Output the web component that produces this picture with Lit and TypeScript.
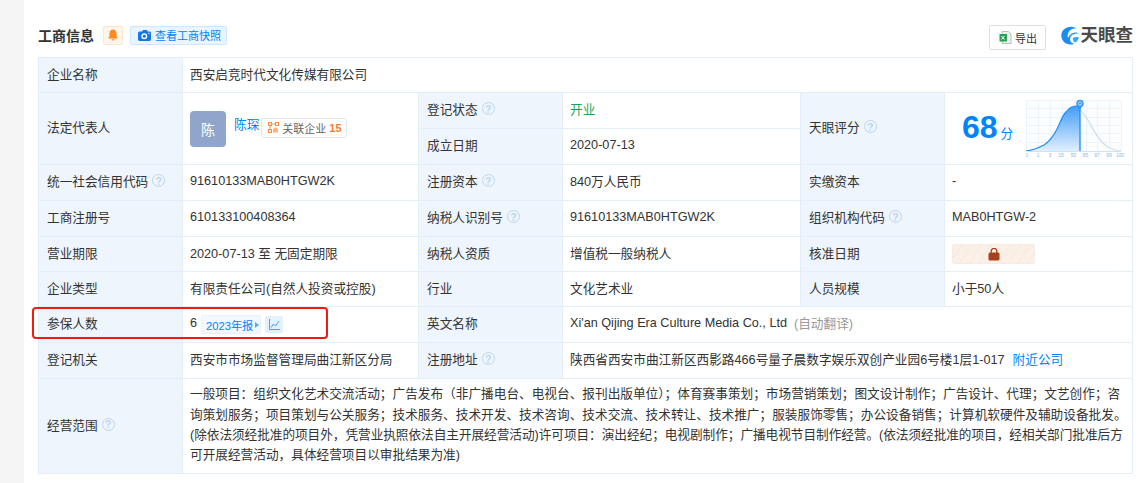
import { LitElement, html, css, svg } from "lit";
import { customElement } from "lit/decorators.js";

const area =
  "M0 52 C6 51.500 12 49 18 46 C24 42 28 36 31 30 C34 24 36 17 40 13 C43 9 46 7 50 7 C52 7 53 8 54 10";
const rest = "M54 10 C57 13 59 17 62 21 C65 26 68 33 72 38 C75 42 78 46 82 48 C86 50 90 52 95 52";

const chart = () => {
  const xs = [0.5, 12, 24, 35, 47.5, 59.5, 71, 83, 94];
  const labels = ["0", "1", "3", "15", "50", "85", "97", "99", "100"];
  return html`<svg class="chart" width="100" height="60" viewBox="0 0 100 60" aria-hidden="true">
    <defs>
      <linearGradient id="fill" x1="0" y1="0" x2="0" y2="1">
        <stop offset="0" stop-color="#3f9dfb"></stop>
        <stop offset="1" stop-color="#e3f0fe"></stop>
      </linearGradient>
    </defs>
    <rect x="0.5" y="1.500" width="95" height="51" fill="#fbfdff"></rect>
    ${[0, 12, 24, 36, 48, 60, 71, 83, 95].map(
      (x) => svg`<line x1=${x + 0.5} x2=${x + 0.5} y1="1" y2="52" stroke="#edf3fa"></line>`
    )}
    ${[1, 9, 18, 26, 34, 43].map(
      (y) => svg`<line x1="0" x2="95" y1=${y + 0.5} y2=${y + 0.5} stroke="#edf3fa"></line>`
    )}
    <path d=${rest} fill="none" stroke="#d5e0ea" stroke-width="1.300"></path>
    <path d=${area + " L54 52.500 L0 52.500 Z"} fill="url(#fill)"></path>
    <path d=${area} fill="none" stroke="#1f8bf5" stroke-width="1.200"></path>
    <line x1="54" x2="54" y1="8" y2="53" stroke="#2b90f5" stroke-width="1.400"></line>
    <line x1="0" x2="95" y1="52.500" y2="52.500" stroke="#cfe3f8"></line>
    <circle cx="54" cy="4.500" r="3.800" fill="#3c97f3"></circle>
    <path d="M51.800 7.500 L54 10.500 L56.200 7.500 Z" fill="#3c97f3"></path>
    <circle cx="54" cy="4.500" r="1.700" fill="none" stroke="#d8ebfe" stroke-width=".8"></circle>
    ${labels.map(
      (l, i) =>
        svg`<text x=${xs[i]} y="58" text-anchor="middle" font-size="4.800" fill="#86b4e6" font-family="Liberation Sans, sans-serif">${l}</text>`
    )}
  </svg>`;
};

@customElement("app-root")
export class AppRoot extends LitElement {
  static styles = css`
    :host {
      display: block;
      width: 1142px;
      height: 483px;
      overflow: hidden;
      background: #f5f5f5;
      font-family: "Liberation Sans", "Noto Sans CJK SC", sans-serif;
      font-size: 12.67px;
      color: #333;
    }
    .panel {
      position: relative;
      margin-left: 24px;
      height: 483px;
      box-sizing: border-box;
      background: #fff;
      padding: 25px 9px 0 14px;
    }
    .head {
      display: flex;
      justify-content: space-between;
      height: 32px;
    }
    .head-left {
      display: flex;
      align-items: center;
      height: 20px;
    }
    .title {
      font-size: 14px;
      font-weight: 700;
      color: #333;
      margin-right: 9px;
    }
    .bell {
      display: flex;
      align-items: center;
      justify-content: center;
      box-sizing: border-box;
      width: 20px;
      height: 19px;
      border: 1px solid #fde7d0;
      background: #fff5ea;
      border-radius: 2px;
      margin-right: 7px;
    }
    .snap {
      display: flex;
      align-items: center;
      gap: 4px;
      box-sizing: border-box;
      width: 97px;
      height: 19px;
      padding-left: 7px;
      border: 1px solid #cfe6fd;
      background: #e9f4ff;
      border-radius: 2px;
      color: #0084ff;
      font-size: 11px;
    }
    .head-right {
      display: flex;
      align-items: flex-start;
    }
    .export {
      display: flex;
      align-items: center;
      gap: 3px;
      box-sizing: border-box;
      width: 57px;
      height: 25px;
      padding-left: 9px;
      border: 1px solid #e0e0e0;
      border-radius: 2px;
      font-size: 11px;
      color: #333;
      margin-right: 15px;
    }
    .logo {
      display: flex;
      align-items: center;
      gap: 1px;
      width: 72px;
      height: 20px;
      font-size: 17.5px;
      font-weight: 700;
      color: #4a4a4a;
      line-height: 20px;
      white-space: nowrap;
    }
    .table {
      display: grid;
      grid-template-columns: 143px 235px 143px 237px 143px 187px;
      grid-template-rows: 34px 35px 35px 35px 35px 34px 34px 35px 35px 94px;
      gap: 1px;
      width: 1095px;
      box-sizing: border-box;
      border: 1px solid #e4eef7;
      background: #e4eef7;
    }
    .l,
    .v {
      display: flex;
      align-items: center;
      padding: 0 8px 4px;
      min-width: 0;
      white-space: nowrap;
    }
    .l {
      background: #eef5fd;
      color: #333;
    }
    .v {
      background: #fff;
      padding-left: 7px;
    }
    .v.flush {
      padding-bottom: 0;
    }
    .w5 { grid-column: span 5; }
    .w3 { grid-column: span 3; }
    .r2 { grid-row: span 2; }
    .q {
      display: inline-flex;
      align-items: center;
      justify-content: center;
      box-sizing: border-box;
      width: 13px;
      height: 13px;
      margin-left: 4px;
      border: 1.2px solid #bdd5ec;
      border-radius: 50%;
      color: #bdd5ec;
      font-size: 10.5px;
      font-weight: 700;
    }
    .green { color: #1ba455; }
    .avatar {
      display: flex;
      align-items: center;
      justify-content: center;
      width: 36px;
      height: 36px;
      border-radius: 4px;
      background: #8fa5cc;
      color: #fff;
      font-size: 14px;
      margin-right: 8px;
    }
    .name {
      color: #0084ff;
      margin-bottom: 10px;
      margin-right: 2px;
    }
    .tag {
      display: flex;
      align-items: center;
      box-sizing: border-box;
      width: 86px;
      height: 20px;
      padding-left: 6px;
      gap: 3px;
      border: 1px solid #e4e8ee;
      border-radius: 2px;
      color: #666;
      font-size: 11px;
      margin-bottom: 2px;
    }
    .tag b {
      color: #ff7a2f;
      font-size: 11px;
    }
    .score {
      padding-left: 17px;
    }
    .num {
      color: #0084ff;
      font-size: 32px;
      font-weight: 700;
      line-height: 36px;
      margin-bottom: 3px;
    }
    .unit {
      color: #0084ff;
      margin: 7px 0 0 3px;
    }
    .chart {
      margin-left: 13px;
      margin-top: 1px;
      flex: none;
    }
    .lock {
      display: flex;
      align-items: center;
      justify-content: center;
      box-sizing: border-box;
      width: 83px;
      height: 20px;
      border: 1px solid #f7eadf;
      border-radius: 2px;
      background: repeating-linear-gradient(125deg, #faf0e7 0 7px, #f6e9dd 7px 8px);
    }
    .six {
      margin-bottom: 3px;
    }
    .year {
      display: flex;
      align-items: center;
      gap: 2px;
      box-sizing: border-box;
      width: 60px;
      height: 19px;
      margin-left: 4px;
      padding-left: 4px;
      background: #f2f8ff;
      border: 1px solid #e8f2fc;
      border-radius: 2px;
      color: #0084ff;
      font-size: 11.2px;
    }
    .tri {
      width: 0;
      height: 0;
      border-left: 4px solid #58a9f7;
      border-top: 3px solid transparent;
      border-bottom: 3px solid transparent;
    }
    .trend {
      display: flex;
      align-items: center;
      justify-content: center;
      width: 18px;
      height: 17px;
      margin-left: 4px;
      border-radius: 2px;
      background: #e4f0fc;
    }
    .en-note { color: #999; margin-left: 7px; }
    .near { color: #0084ff; margin-left: 8px; }
    .scope {
      padding-bottom: 2px;
      line-height: 20.3px;
    }
    .scope span { display: block; }
    .scope .tight { letter-spacing: -0.05px; }
    .mark {
      position: absolute;
      left: 8px;
      top: 307px;
      width: 296px;
      height: 32px;
      box-sizing: border-box;
      border: 2.5px solid #f01b10;
      border-radius: 4px;
      pointer-events: none;
    }
  `;

  private q() {
    return html`<span class="q">?</span>`;
  }

  render() {
    return html`<div class="panel">
      <div class="head">
        <div class="head-left">
          <span class="title">工商信息</span>
          <span class="bell">
            <svg width="10" height="12" viewBox="0 0 10 12" aria-hidden="true">
              <path d="M5 0.600c2.300 0 3.500 1.900 3.500 4v2.600L10 9.400H0l1.500-2.200V4.600c0-2.100 1.200-4 3.500-4z" fill="#ff8a1f"></path>
              <path d="M3.400 10.200h3.200c-.2.900-.8 1.300-1.600 1.300s-1.400-.4-1.600-1.300z" fill="#ff8a1f"></path>
            </svg>
          </span>
          <span class="snap">
            <svg width="13" height="11" viewBox="0 0 13 11" aria-hidden="true">
              <path d="M1.500 1.500H4L5 0h4l.6 1.500h2A1.400 1.400 0 0 1 13 2.900v6.700A1.400 1.400 0 0 1 11.600 11H1.400A1.400 1.400 0 0 1 0 9.600V3a1.500 1.500 0 0 1 1.500-1.500z" fill="#1478e6"></path>
              <circle cx="6.300" cy="6.200" r="2.300" fill="none" stroke="#fff" stroke-width="1.300"></circle>
              <circle cx="10.800" cy="3.400" r=".7" fill="#fff"></circle>
            </svg>
            查看工商快照
          </span>
        </div>
        <div class="head-right">
          <span class="export">
            <svg width="13" height="13" viewBox="0 0 13 13" aria-hidden="true">
              <path d="M3 .5h6.500L12 3v9.500H3z" fill="#eef0ee" stroke="#a9b0ab" stroke-width=".8"></path>
              <rect x="0.500" y="3" width="7.500" height="7.500" fill="#22a354"></rect>
              <path d="M2.500 5l3 3.500M5.500 5l-3 3.500" stroke="#fff" stroke-width="1"></path>
            </svg>
            导出
          </span>
          <span class="logo">
            <svg width="19" height="19" viewBox="0 0 19 19" aria-hidden="true">
              <path d="M10.500 0.500C5 .3.300 4.300.300 9.600c0 5.200 4.300 9.200 9.300 9.200 1.700 0 3-.4 4.300-1.200-2.800.2-4.800-2-4.600-4.600.2-3.500 4-6.200 8.900-5.300-1-1.100-3.300-1.500-5.100-1-2.800.8-4.900 3-5.800 5.300C6 9.500 7.500 5 10.500 3.300c1.600-.9 3.500-1.100 5.300-.7C14.600 1.200 12.700.5 10.500.5z" fill="#1c8df0"></path>
              <path d="M12 12.500c1.800-1.500 4.200-1.900 6.400-1.200-.4 2.300-1.700 4.300-3.600 5.500-1.700-.6-2.800-2.600-2.800-4.300z" fill="#38a7f5"></path>
            </svg>
            天眼查
          </span>
        </div>
      </div>

      <div class="table">
        <div class="l">企业名称</div>
        <div class="v w5">西安启竞时代文化传媒有限公司</div>

        <div class="l r2">法定代表人</div>
        <div class="v r2 flush">
          <span class="avatar">陈</span>
          <span class="name">陈琛</span>
          <span class="tag">
            <svg width="11" height="11" viewBox="0 0 11 11" aria-hidden="true">
              <path d="M2 2h7M2 2v7M9 2v2M2 9h2" fill="none" stroke="#ff8a3c" stroke-width="1"></path>
              <rect x="0.500" y="0.500" width="3" height="3" fill="#fff" stroke="#ff8a3c"></rect>
              <rect x="7.500" y="0.500" width="3" height="3" fill="#fff" stroke="#ff8a3c"></rect>
              <rect x="0.500" y="7.500" width="3" height="3" fill="#fff" stroke="#ff8a3c"></rect>
              <path d="M5 7l2.500-2L10 7v3.500H5z" fill="#ffb27a"></path>
            </svg>
            关联企业 <b>15</b>
          </span>
        </div>
        <div class="l">登记状态${this.q()}</div>
        <div class="v green">开业</div>
        <div class="l r2">天眼评分${this.q()}</div>
        <div class="v r2 score flush">
          <span class="num">68</span><span class="unit">分</span>
          ${chart()}
        </div>
        <div class="l">成立日期</div>
        <div class="v">2020-07-13</div>

        <div class="l">统一社会信用代码${this.q()}</div>
        <div class="v">91610133MAB0HTGW2K</div>
        <div class="l">注册资本${this.q()}</div>
        <div class="v">840万人民币</div>
        <div class="l">实缴资本</div>
        <div class="v">-</div>

        <div class="l">工商注册号</div>
        <div class="v">610133100408364</div>
        <div class="l">纳税人识别号${this.q()}</div>
        <div class="v">91610133MAB0HTGW2K</div>
        <div class="l">组织机构代码${this.q()}</div>
        <div class="v">MAB0HTGW-2</div>

        <div class="l">营业期限</div>
        <div class="v">2020-07-13 至 无固定期限</div>
        <div class="l">纳税人资质</div>
        <div class="v">增值税一般纳税人</div>
        <div class="l">核准日期</div>
        <div class="v flush">
          <span class="lock">
            <svg width="12" height="13" viewBox="0 0 12 13" aria-hidden="true">
              <path d="M3.200 5V3.200a2.800 2.800 0 0 1 5.600 0V5" fill="none" stroke="#a8401e" stroke-width="1.300"></path>
              <rect x="0.500" y="4.500" width="11" height="8" rx="1.500" fill="#a8401e"></rect>
            </svg>
          </span>
        </div>

        <div class="l">企业类型</div>
        <div class="v">有限责任公司(自然人投资或控股)</div>
        <div class="l">行业</div>
        <div class="v">文化艺术业</div>
        <div class="l">人员规模</div>
        <div class="v">小于50人</div>

        <div class="l">参保人数</div>
        <div class="v flush">
          <span class="six">6</span>
          <span class="year">2023年报<span class="tri"></span></span>
          <span class="trend">
            <svg width="11" height="11" viewBox="0 0 11 11" aria-hidden="true">
              <path d="M.5 0v10.500H11" fill="none" stroke="#3b96ef" stroke-width=".9"></path>
              <path d="M2 8.500L4.500 5l2 2L10 2" fill="none" stroke="#3b96ef" stroke-width=".9"></path>
            </svg>
          </span>
        </div>
        <div class="l">英文名称</div>
        <div class="v w3">Xi'an Qijing Era Culture Media Co., Ltd<span class="en-note">(自动翻译)</span></div>

        <div class="l">登记机关</div>
        <div class="v">西安市市场监督管理局曲江新区分局</div>
        <div class="l">注册地址${this.q()}</div>
        <div class="v w3">陕西省西安市曲江新区西影路466号量子晨数字娱乐双创产业园6号楼1层1-017<span class="near">附近公司</span></div>

        <div class="l">经营范围${this.q()}</div>
        <div class="v w5 scope">
          <div>
            <span>一般项目：组织文化艺术交流活动；广告发布（非广播电台、电视台、报刊出版单位）；体育赛事策划；市场营销策划；图文设计制作；广告设计、代理；文艺创作；咨</span>
            <span>询策划服务；项目策划与公关服务；技术服务、技术开发、技术咨询、技术交流、技术转让、技术推广；服装服饰零售；办公设备销售；计算机软硬件及辅助设备批发。</span>
            <span class="tight">(除依法须经批准的项目外，凭营业执照依法自主开展经营活动)许可项目：演出经纪；电视剧制作；广播电视节目制作经营。(依法须经批准的项目，经相关部门批准后方</span>
            <span>可开展经营活动，具体经营项目以审批结果为准)</span>
          </div>
        </div>
      </div>
      <div class="mark"></div>
    </div>`;
  }
}
